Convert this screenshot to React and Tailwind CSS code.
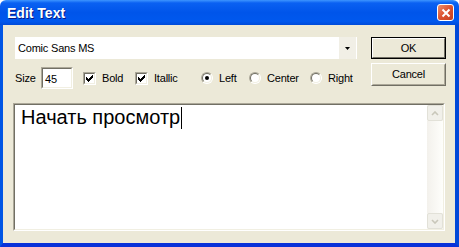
import React from 'react';

// classic sunken edge used by inputs, checkboxes and the text box
const sunken =
  'border-t border-l border-t-[#aca899] border-l-[#aca899] border-b border-r border-b-white border-r-white';

const checkRows = ['......X', '.....XX', 'X...XXX', 'XX.XXX.', 'XXXXX..', '.XXX...', '..X....'];

function Check() {
  return (
    <svg width="7" height="7" viewBox="0 0 7 7" shapeRendering="crispEdges">
      {checkRows.map((row, y) =>
        row.split('').map((c, x) => (c === 'X' ? <rect key={`${x}-${y}`} x={x} y={y} width="1" height="1" fill="#000" /> : null))
      )}
    </svg>
  );
}

function CheckBox({ label, checked }) {
  return (
    <div className="flex items-center">
      <div className={`w-[13px] h-[13px] shrink-0 ${sunken}`}>
        <div className="w-full h-full border border-t-[#716f64] border-l-[#716f64] border-b-[#f1efe2] border-r-[#f1efe2] bg-white flex items-center justify-center">
          {checked && <Check />}
        </div>
      </div>
      <span className="ml-[6px]">{label}</span>
    </div>
  );
}

function Radio({ label, checked }) {
  return (
    <div className="flex items-center">
      <div className="w-[12px] h-[12px] shrink-0 rounded-full border border-t-[#aca899] border-l-[#aca899] border-b-white border-r-white bg-[#f1efe2]">
        <div className="w-full h-full rounded-full border border-t-[#716f64] border-l-[#716f64] border-b-[#f1efe2] border-r-[#f1efe2] bg-white flex items-center justify-center">
          {checked && <div className="w-[4px] h-[4px] rounded-full bg-black" />}
        </div>
      </div>
      <span className="ml-[6px]">{label}</span>
    </div>
  );
}

function ScrollArrow({ up }) {
  return (
    <div className="h-[16px] w-full rounded-[2px] border border-[#e2e1d8] bg-[#f1f0ea] flex items-center justify-center">
      <svg width="8" height="5" viewBox="0 0 8 5">
        <path d={up ? 'M1 4L4 1L7 4' : 'M1 1L4 4L7 1'} stroke="#c9c7ba" strokeWidth="1.6" fill="none" />
      </svg>
    </div>
  );
}

export default function App() {
  return (
    <div
      className="w-[459px] h-[247px] flex flex-col text-[11px] tracking-[-0.2px] text-black overflow-hidden"
      style={{ fontFamily: '"Liberation Sans", Arial, sans-serif' }}
    >
      {/* Title bar */}
      <div className="h-[25px] flex items-center justify-between pl-[7px] pr-[5px] rounded-t-[6px] bg-[linear-gradient(to_bottom,#3d95ff,#0a61f2_12%,#0055ea_50%,#0058ee_85%,#004bd9)]">
        <span className="text-white font-bold text-[14px] tracking-normal leading-none [text-shadow:1px_1px_#0a1883]">Edit Text</span>
        <div className="w-[17px] h-[17px] rounded-[3px] border border-white bg-[linear-gradient(135deg,#ec8f6c,#dc5230_50%,#c7401f)] flex items-center justify-center">
          <svg width="10" height="10" viewBox="0 0 10 10">
            <path d="M1.5 1.5L8.5 8.5M8.5 1.5L1.5 8.5" stroke="#fff" strokeWidth="2" />
          </svg>
        </div>
      </div>

      {/* Body */}
      <div className="flex-1 flex flex-col bg-[#ece9d8] border-l-[3px] border-r-[4px] border-b-[4px] border-l-[#0055e5] border-r-[#0048d8] border-b-[#0831d9] px-[10px] pt-[12px] pb-[12px]">
        <div className="flex ml-[2px]">
          <div className="w-[342px] shrink-0 flex flex-col">
            {/* font combo */}
            <div className="h-[22px] bg-white flex items-center">
              <span className="flex-1 pl-[3px]">Comic Sans MS</span>
              <div className="w-[18px] h-full bg-[#f1efe6] border-r border-white flex items-center justify-center">
                <svg width="5" height="3" viewBox="0 0 5 3">
                  <path d="M0 0h5L2.5 3z" fill="#000" />
                </svg>
              </div>
            </div>
            {/* options row */}
            <div className="flex items-center mt-[8px] h-[22px]">
              <span className="w-[26px] shrink-0">Size</span>
              <div className={`w-[32px] h-[22px] shrink-0 ${sunken}`}>
                <div className="w-full h-full border border-t-[#716f64] border-l-[#716f64] border-b-[#f1efe2] border-r-[#f1efe2] bg-white pl-[2px] pt-[2px]">
                  45
                </div>
              </div>
              <div className="ml-[10px] w-[52px] shrink-0">
                <CheckBox label="Bold" checked />
              </div>
              <div className="w-[66px] shrink-0">
                <CheckBox label="Itallic" checked />
              </div>
              <div className="w-[48px] shrink-0">
                <Radio label="Left" checked />
              </div>
              <div className="w-[61px] shrink-0">
                <Radio label="Center" />
              </div>
              <div className="shrink-0">
                <Radio label="Right" />
              </div>
            </div>
          </div>

          <div className="ml-[14px] flex flex-col gap-[4px]">
            <button className="w-[75px] h-[22px] border border-black bg-[#ece9d8]">
              <div className="w-full h-full border border-t-white border-l-white border-b-[#716f64] border-r-[#716f64] flex items-center justify-center">
                OK
              </div>
            </button>
            <button className="w-[75px] h-[23px] border border-t-white border-l-white border-b-[#716f64] border-r-[#716f64] bg-[#ece9d8]">
              <div className="w-full h-full border border-t-[#ece9d8] border-l-[#ece9d8] border-b-[#aca899] border-r-[#aca899] flex items-center justify-center">
                Cancel
              </div>
            </button>
          </div>
        </div>

        {/* Text box */}
        <div className={`mt-[14px] flex-1 ${sunken}`}>
          <div className="w-full h-full flex border border-t-[#716f64] border-l-[#716f64] border-b-[#f1efe2] border-r-[#f1efe2] bg-white">
            <div className="flex-1 pl-[6px] pt-[1px] tracking-normal">
              <span className="text-[20px] leading-[23px] align-middle">Начать просмотр</span>
              <span className="inline-block w-px h-[22px] bg-black align-middle ml-[1px]" />
            </div>
            <div className="w-[16px] flex flex-col bg-[#f7f6f1]">
              <ScrollArrow up />
              <div className="flex-1 bg-[linear-gradient(to_right,#f3f1ec,#fefefb)]" />
              <ScrollArrow />
            </div>
          </div>
        </div>
      </div>
    </div>
  );
}
